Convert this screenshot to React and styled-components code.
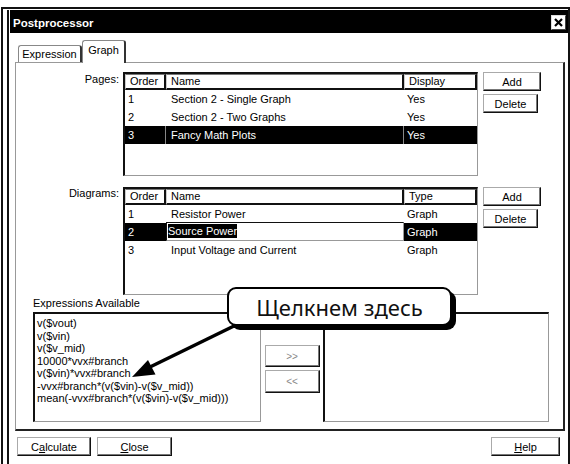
import React from "react";
import styled, { createGlobalStyle } from "styled-components";

const Global = createGlobalStyle`
  body {
    margin: 0;
    background: #fff;
  }
`;

const Root = styled.div`
  position: relative;
  width: 570px;
  height: 464px;
  overflow: hidden;
  background: #fff;
  font-family: "Liberation Sans", Arial, sans-serif;
  font-size: 11px;
  color: #000;
`;

const Window = styled.div`
  margin: 7px 0 0 1px;
  width: 569px;
  height: 457px;
  box-sizing: border-box;
  border: 2px solid #111;
  border-bottom: none;
  padding: 1px 0 0 4px;
  display: flex;
`;

const Frame = styled.div`
  flex: 1;
  border-left: 2px solid #111;
  padding-left: 1px;
  display: flex;
  flex-direction: column;
`;

const TitleBar = styled.div`
  height: 23px;
  box-sizing: border-box;
  background: #000;
  color: #fff;
  font-weight: bold;
  font-size: 11.5px;
  display: flex;
  align-items: center;
  justify-content: space-between;
  padding: 2px 2px 0 3px;
`;

const CloseBox = styled.div`
  width: 15px;
  height: 15px;
  box-sizing: border-box;
  background: #fff;
  border: 1px solid;
  border-color: #ddd #444 #444 #ddd;
  display: flex;
  align-items: center;
  justify-content: center;
`;

const Body = styled.div`
  padding: 7px 3px 0 5px;
  display: flex;
  flex-direction: column;
`;

const TabRow = styled.div`
  display: flex;
  align-items: flex-end;
  height: 23px;
  padding-left: 3px;
  margin-bottom: -1px;
  position: relative;
  z-index: 1;
`;

const Tab = styled.div`
  width: ${(p) => p.$w}px;
  height: ${(p) => (p.$active ? 23 : 17)}px;
  margin-bottom: ${(p) => (p.$active ? 0 : 1)}px;
  box-sizing: border-box;
  background: #fff;
  border: 1px solid #888;
  border-right: 2px solid #333;
  border-bottom: none;
  border-radius: 3px 3px 0 0;
  display: flex;
  justify-content: center;
  padding-top: ${(p) => (p.$active ? 3 : 2)}px;
`;

const Panel = styled.div`
  border-top: 1px solid #999;
  border-left: 1px solid #999;
  border-right: 2px solid #222;
  border-bottom: 2px solid #222;
  padding: 9px 0 7px 0;
  display: flex;
  flex-direction: column;
`;

const ListRow = styled.div`
  display: grid;
  grid-template-columns: 103px 355px 58px;
  column-gap: 4px;
  height: ${(p) => p.$h}px;
  margin-bottom: ${(p) => p.$mb || 0}px;
`;

const FieldLabel = styled.div`
  text-align: right;
  padding-top: ${(p) => p.$pt || 0}px;
`;

const Table = styled.div`
  box-sizing: border-box;
  border-top: 2px solid #111;
  border-left: 2px solid #111;
  border-right: 1px solid #999;
  border-bottom: 1px solid #999;
  background: #fff;
`;

const Grid = styled.div`
  display: grid;
  grid-template-columns: 41px 238px 73px;
`;

const HeadCell = styled.div`
  height: 16px;
  box-sizing: border-box;
  border-top: 1px solid #777;
  border-left: 1px solid #ccc;
  border-right: 2px solid #111;
  border-bottom: 2px solid #111;
  padding-left: 4px;
  line-height: 13px;
`;

const Row = styled(Grid)`
  height: 18px;
  line-height: 18px;
  background: ${(p) => (p.$selected ? "#000" : "transparent")};
  color: ${(p) => (p.$selected ? "#fff" : "#000")};
`;

const Cell = styled.div`
  padding-left: ${(p) => p.$pad || 3}px;
  white-space: nowrap;
  overflow: hidden;
  background: ${(p) => (p.$dark ? "#000" : "transparent")};
  color: ${(p) => (p.$dark ? "#fff" : "inherit")};
  border-right: ${(p) => (p.$sep ? "1px solid #888" : "none")};
`;

const EditBox = styled.div`
  box-sizing: border-box;
  height: 19px;
  margin-top: -1px;
  border-top: 1px solid #111;
  border-left: 1px solid #111;
  border-right: 1px solid #999;
  border-bottom: 1px solid #999;
  background: #fff;
  line-height: 17px;
  padding-left: 1px;
`;

const Selection = styled.span`
  background: #000;
  color: #fff;
  padding: 1px 0;
`;

const SideButtons = styled.div`
  display: flex;
  flex-direction: column;
  gap: 3px;
  padding-left: 1px;
`;

const Button = styled.div`
  width: ${(p) => p.$w || 58}px;
  height: ${(p) => p.$h || 19}px;
  box-sizing: border-box;
  background: #fff;
  border: 1px solid;
  border-color: #aaa #111 #111 #aaa;
  box-shadow: inset -1px -1px 0 #777;
  display: flex;
  align-items: center;
  justify-content: center;
  color: ${(p) => (p.$disabled ? "#888" : "#000")};
  font-size: ${(p) => (p.$disabled ? 10 : 11)}px;
`;

const Expressions = styled.div`
  padding-left: 17px;
  margin-top: 2px;
  display: flex;
  flex-direction: column;
`;

const GroupLabel = styled.div`
  line-height: 13px;
  margin-bottom: 2px;
`;

const ExprRow = styled.div`
  display: flex;
  height: 110px;
`;

const ListBox = styled.div`
  width: ${(p) => p.$w}px;
  box-sizing: border-box;
  border-top: 2px solid #111;
  border-left: 2px solid #111;
  border-right: 1px solid #999;
  border-bottom: 1px solid #999;
  background: #fff;
  padding: 3px 0 0 2px;
  line-height: 12.5px;
`;

const Mover = styled.div`
  width: 62px;
  display: flex;
  flex-direction: column;
  align-items: center;
  gap: 3px;
  padding-top: 33px;
`;

const Footer = styled.div`
  display: flex;
  gap: 6px;
  margin: 6px 5px 0 2px;
`;

const Callout = styled.div`
  position: absolute;
  left: 227px;
  top: 287px;
  width: 225px;
  height: 39px;
  box-sizing: border-box;
  border: 2px solid #000;
  border-radius: 9px;
  background: #fff;
  box-shadow: 4px 4px 0 #000;
  display: flex;
  align-items: center;
  justify-content: center;
  font-family: "Noto Sans", "Open Sans", sans-serif;
  font-size: 22px;
  color: #111;
  z-index: 3;
`;

const ArrowLayer = styled.svg`
  position: absolute;
  left: 0;
  top: 0;
  z-index: 2;
  pointer-events: none;
`;

const pages = [
  ["1", "Section 2 - Single Graph", "Yes"],
  ["2", "Section 2 - Two Graphs", "Yes"],
  ["3", "Fancy Math Plots", "Yes"],
];

const exprs = [
  "v($vout)",
  "v($vin)",
  "v($v_mid)",
  "10000*vvx#branch",
  "v($vin)*vvx#branch",
  "-vvx#branch*(v($vin)-v($v_mid))",
  "mean(-vvx#branch*(v($vin)-v($v_mid)))",
];

const Header = ({ last }) => (
  <Grid>
    <HeadCell>Order</HeadCell>
    <HeadCell>Name</HeadCell>
    <HeadCell>{last}</HeadCell>
  </Grid>
);

const App = () => {
  return (
    <Root>
      <Global />
      <Window>
        <Frame>
          <TitleBar>
            <span>Postprocessor</span>
            <CloseBox>
              <svg width="9" height="9" viewBox="0 0 9 9">
                <path d="M1 1L8 8M8 1L1 8" stroke="#000" strokeWidth="2.2" />
              </svg>
            </CloseBox>
          </TitleBar>
          <Body>
            <TabRow>
              <Tab $w={64}>Expression</Tab>
              <Tab $w={44} $active>
                Graph
              </Tab>
            </TabRow>
            <Panel>
              <ListRow $h={104} $mb={11}>
                <FieldLabel $pt={1}>Pages:</FieldLabel>
                <Table>
                  <Header last="Display" />
                  {pages.map(([o, n, d]) => (
                    <Row key={o} $selected={o === "3"}>
                      <Cell $sep={o === "3"}>{o}</Cell>
                      <Cell $pad={5} $sep={o === "3"}>
                        {n}
                      </Cell>
                      <Cell>{d}</Cell>
                    </Row>
                  ))}
                </Table>
                <SideButtons>
                  <Button>Add</Button>
                  <Button $w={55}>Delete</Button>
                </SideButtons>
              </ListRow>
              <ListRow $h={108}>
                <FieldLabel>Diagrams:</FieldLabel>
                <Table>
                  <Header last="Type" />
                  <Row>
                    <Cell>1</Cell>
                    <Cell $pad={5}>Resistor Power</Cell>
                    <Cell>Graph</Cell>
                  </Row>
                  <Row>
                    <Cell $dark>2</Cell>
                    <EditBox>
                      <Selection>Source Power</Selection>
                    </EditBox>
                    <Cell $dark>Graph</Cell>
                  </Row>
                  <Row>
                    <Cell>3</Cell>
                    <Cell $pad={5}>Input Voltage and Current</Cell>
                    <Cell>Graph</Cell>
                  </Row>
                </Table>
                <SideButtons>
                  <Button>Add</Button>
                  <Button $w={55}>Delete</Button>
                </SideButtons>
              </ListRow>
              <Expressions>
                <GroupLabel>Expressions Available</GroupLabel>
                <ExprRow>
                  <ListBox $w={228}>
                    {exprs.map((e) => (
                      <div key={e}>{e}</div>
                    ))}
                  </ListBox>
                  <Mover>
                    <Button $w={55} $h={22} $disabled>
                      &gt;&gt;
                    </Button>
                    <Button $w={55} $h={23} $disabled>
                      &lt;&lt;
                    </Button>
                  </Mover>
                  <ListBox $w={226} />
                </ExprRow>
              </Expressions>
            </Panel>
            <Footer>
              <Button $w={74}>
                C<u>a</u>lculate
              </Button>
              <Button $w={75}>
                <u>C</u>lose
              </Button>
              <Button $w={69} style={{ marginLeft: "auto" }}>
                <u>H</u>elp
              </Button>
            </Footer>
          </Body>
        </Frame>
      </Window>
      <ArrowLayer width="570" height="464" viewBox="0 0 570 464">
        <line x1="236" y1="325" x2="150" y2="367" stroke="#000" strokeWidth="3.5" />
        <polygon points="132,377 155.5,374.5 148,360" fill="#000" />
      </ArrowLayer>
      <Callout>Щелкнем здесь</Callout>
    </Root>
  );
};

export default App;
